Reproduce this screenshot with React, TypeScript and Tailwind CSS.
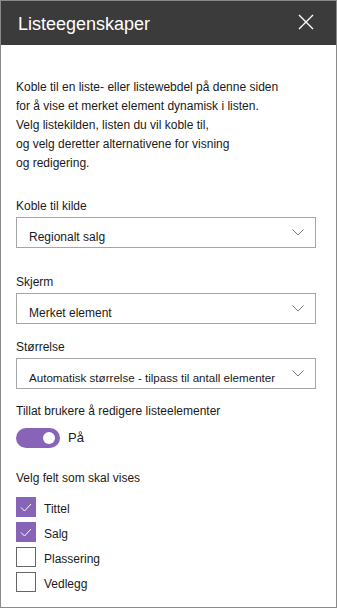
import React from "react";

const font = { fontFamily: '"Liberation Sans", Arial, sans-serif' };

function Chevron() {
  return (
    <svg width="12" height="7" viewBox="0 0 12 7" className="shrink-0">
      <path d="M0.5 0.5 L6 6 L11.5 0.5" fill="none" stroke="#7a7a7a" strokeWidth="1" />
    </svg>
  );
}

function Dropdown({ value, small }: { value: string; small?: boolean }) {
  return (
    <div className="mt-[3px] flex h-[31px] w-[300px] items-center justify-between border border-[#a6a6a6] pl-[12px] pr-[11px]">
      <span
        className={
          small
            ? "mt-[8px] text-[11.6px] leading-[16px] text-[#1a1a1a] whitespace-nowrap"
            : "mt-[8px] text-[12px] leading-[16px] text-[#1a1a1a] whitespace-nowrap"
        }
      >
        {value}
      </span>
      <Chevron />
    </div>
  );
}

function Checkbox({ label, checked }: { label: string; checked?: boolean }) {
  return (
    <div className="flex h-[20px] items-center gap-[8px]">
      {checked ? (
        <div className="flex h-[20px] w-[20px] items-center justify-center bg-[#8764b8]">
          <svg width="12" height="9" viewBox="0 0 12 9">
            <path d="M1 4.5 L4.5 8 L11 1" fill="none" stroke="#ffffff" strokeWidth="1" />
          </svg>
        </div>
      ) : (
        <div className="h-[20px] w-[20px] border border-[#666666] bg-white" />
      )}
      <span className="mt-[3px] text-[12px] leading-[16px] text-[#1a1a1a]">{label}</span>
    </div>
  );
}

export default function App() {
  return (
    <div style={font} className="flex h-[608px] w-[337px] flex-col border border-[#8a8a8a] bg-white">
      {/* header */}
      <div className="flex h-[44px] shrink-0 items-center justify-between bg-[#3b3b3b] pl-[17px] pr-[22px]">
        <span className="mt-[2px] text-[18px] leading-[22px] text-white">Listeegenskaper</span>
        <svg width="16" height="16" viewBox="0 0 16 16" className="mb-[2px]">
          <path d="M1 1 L15 15 M15 1 L1 15" stroke="#ffffff" strokeWidth="1.4" />
        </svg>
      </div>

      <div className="flex flex-col pl-[15px] text-[#1a1a1a]">
        <p className="mt-[33px] text-[12px] leading-[19px]">
          Koble til en liste- eller listewebdel på denne siden
          <br />
          for å vise et merket element dynamisk i listen.
          <br />
          Velg listekilden, listen du vil koble til,
          <br />
          og velg deretter alternativene for visning
          <br />
          og redigering.
        </p>

        <div className="mt-[25px] text-[12px] leading-[16px]">Koble til kilde</div>
        <Dropdown value="Regionalt salg" />

        <div className="mt-[26px] text-[12px] leading-[16px]">Skjerm</div>
        <Dropdown value="Merket element" />

        <div className="mt-[15px] text-[12px] leading-[16px]">Størrelse</div>
        <Dropdown value="Automatisk størrelse - tilpass til antall elementer" small />

        <div className="mt-[14px] text-[12px] leading-[16px]">Tillat brukere å redigere listeelementer</div>
        <div className="mt-[9px] flex items-center gap-[8px]">
          <div className="flex h-[20px] w-[44px] items-center justify-end rounded-full bg-[#8764b8] pr-[5px]">
            <div className="h-[12px] w-[12px] rounded-full bg-white" />
          </div>
          <span className="text-[13px] leading-[16px]">På</span>
        </div>

        <div className="mt-[22px] text-[12px] leading-[16px]">Velg felt som skal vises</div>
        <div className="mt-[11px] flex flex-col gap-[5px]">
          <Checkbox label="Tittel" checked />
          <Checkbox label="Salg" checked />
          <Checkbox label="Plassering" />
          <Checkbox label="Vedlegg" />
        </div>
      </div>
    </div>
  );
}
